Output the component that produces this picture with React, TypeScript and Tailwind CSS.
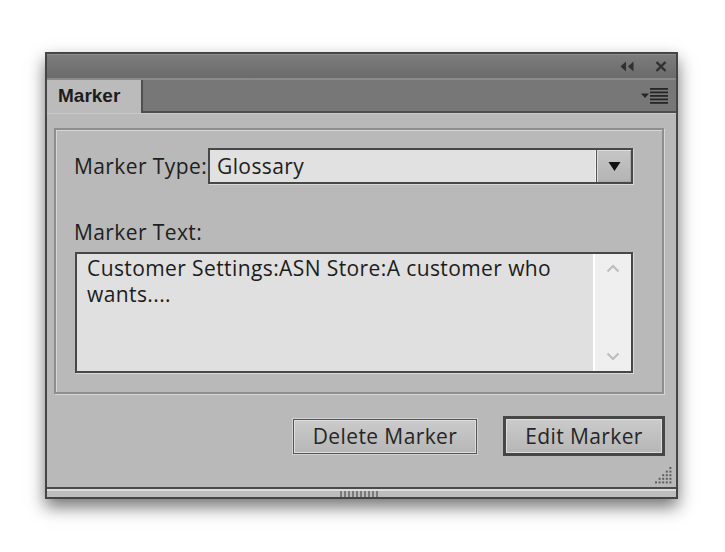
import React from 'react';

const body = { fontFamily: '"Open Sans", "Noto Sans", sans-serif' };

const TitleIcons: React.FC = () => (
  <div className="flex items-center gap-[20px] pr-[9px]">
    <svg width="16" height="11" viewBox="0 0 16 11">
      <path d="M7 0.5 L1.5 5.5 L7 10.5 Z" fill="#303030" />
      <path d="M14.5 0.5 L9 5.5 L14.5 10.5 Z" fill="#303030" />
    </svg>
    <svg width="12" height="11" viewBox="0 0 12 11">
      <path d="M1.5 1 L10.5 10 M10.5 1 L1.5 10" stroke="#303030" strokeWidth="2.4" />
    </svg>
  </div>
);

const MenuIcon: React.FC = () => (
  <svg width="29" height="16" viewBox="0 0 29 16">
    <path d="M1 5.5 H9 L5 10 Z" fill="#262626" />
    <rect x="10" y="0" width="18" height="1.8" fill="#262626" />
    <rect x="10" y="3.5" width="18" height="1.8" fill="#262626" />
    <rect x="10" y="7" width="18" height="1.8" fill="#262626" />
    <rect x="10" y="10.5" width="18" height="1.8" fill="#262626" />
    <rect x="10" y="14" width="18" height="1.8" fill="#262626" />
  </svg>
);

const Grip: React.FC = () => {
  const dots: React.ReactNode[] = [];
  for (let r = 0; r < 5; r++) {
    for (let c = 4 - r; c < 5; c++) {
      dots.push(<rect key={`${r}-${c}`} x={c * 3.6} y={r * 3.6} width="2" height="2" fill="#5e5e5e" />);
    }
  }
  return (
    <svg width="18" height="18" viewBox="0 0 18 18">
      {dots}
    </svg>
  );
};

export default function App() {
  return (
    <div className="w-[725px] h-[552px] bg-white pt-[52px] pl-[45px]" style={body}>
      <div className="w-[633px] h-[447px] border-2 border-[#454545] flex flex-col shadow-[0_8px_16px_rgba(0,0,0,0.55)] bg-[#b9b9b9]">
        {/* title bar */}
        <div className="h-[26px] flex items-center justify-end bg-gradient-to-b from-[#7c7c7c] to-[#6b6b6b] border-t border-[#8e8e8e] border-b-2 border-b-[#8a8a8a]">
          <TitleIcons />
        </div>

        {/* tab row */}
        <div className="h-[33px] flex">
          <div
            className="w-[94px] bg-[#bbbbbb] pl-[11px] flex items-center text-[19px] font-bold text-[#1c1c1c]"
            style={{ fontFamily: '"Liberation Sans", Arial, sans-serif' }}
          >
            Marker
          </div>
          <div className="flex-1 bg-[#777777] border-l-2 border-[#4f4f4f] border-b-2 border-b-[#4d4d4d] flex items-center justify-end pr-[7px]">
            <MenuIcon />
          </div>
        </div>

        {/* content */}
        <div className="flex-1 flex flex-col border-t border-[#c9c9c9] tracking-[0.4px]">
          <div className="mt-[14px] ml-[7px] w-[610px] h-[266px] border-2 border-[#8e8e8e] shadow-[inset_1px_1px_0_#d6d6d6,1px_1px_0_#d6d6d6] pl-[18px] pt-[18px]">
            <div className="flex items-center h-[36px] text-[21px] text-[#202020]">
              <span className="leading-[32px] w-[134px]">Marker Type:</span>
              <div className="w-[425px] h-[36px] border-2 border-[#474747] flex shadow-[1px_1px_0_#d8d8d8]">
                <div className="flex-1 bg-[#e1e1e1] pl-[7px] leading-[32px] border-r border-[#f2f2f2]">Glossary</div>
                <div className="w-[35px] bg-gradient-to-b from-[#c6c6c6] to-[#b3b3b3] border-l border-[#555] shadow-[inset_1px_1px_0_#dcdcdc,inset_-1px_-1px_0_#a8a8a8] flex items-center justify-center">
                  <svg width="13" height="11" viewBox="0 0 13 11">
                    <path d="M0.5 1 H12.5 L6.5 10 Z" fill="#111" />
                  </svg>
                </div>
              </div>
            </div>

            <div className="mt-[35px] text-[21px] leading-[26px] text-[#202020]">Marker Text:</div>

            <div className="mt-[7px] ml-[1px] w-[558px] h-[121px] border-2 border-[#474747] flex shadow-[1px_1px_0_#d8d8d8]">
              <div className="flex-1 bg-[#e0e0e0] pl-[10px] pt-[1px] pr-[8px] text-[21px] leading-[26px] text-[#1c1c1c]">
                Customer Settings:ASN Store:A customer who wants....
              </div>
              <div className="w-[38px] bg-[#efefef] border-l-2 border-white flex flex-col items-center justify-between py-[10px]">
                <svg width="14" height="9" viewBox="0 0 14 9">
                  <path d="M1.5 7.5 L7 2 L12.5 7.5" fill="none" stroke="#bdbdbd" strokeWidth="2.2" />
                </svg>
                <svg width="14" height="9" viewBox="0 0 14 9">
                  <path d="M1.5 1.5 L7 7 L12.5 1.5" fill="none" stroke="#bdbdbd" strokeWidth="2.2" />
                </svg>
              </div>
            </div>
          </div>

          {/* buttons */}
          <div className="mt-[22px] flex items-center justify-end gap-[26px] pr-[11px] text-[21px] text-[#262626]">
            <button className="w-[184px] h-[35px] border border-[#555] bg-gradient-to-b from-[#cbcbcb] to-[#b6b6b6] shadow-[inset_0_0_0_1px_#dedede,0_0_0_1px_#d2d2d2] leading-[33px]">
              Delete Marker
            </button>
            <button className="w-[162px] h-[40px] border-[3px] border-[#474747] bg-gradient-to-b from-[#cbcbcb] to-[#b6b6b6] shadow-[inset_0_0_0_1px_#dedede] leading-[34px]">
              Edit Marker
            </button>
          </div>

          <div className="flex-1 flex items-end justify-end pr-[3px] pb-[2px]">
            <Grip />
          </div>
        </div>

        {/* bottom bar */}
        <div className="h-[10px] border-t-2 border-[#4a4a4a] bg-[#bdbdbd] shadow-[inset_0_2px_0_#dcdcdc] flex justify-start pl-[293px] items-end">
          <div className="flex gap-[2px] h-[6px]">
            {Array.from({ length: 10 }).map((_, i) => (
              <div key={i} className="w-[2px] h-full bg-[#7a7a7a]" />
            ))}
          </div>
        </div>
      </div>
    </div>
  );
}
